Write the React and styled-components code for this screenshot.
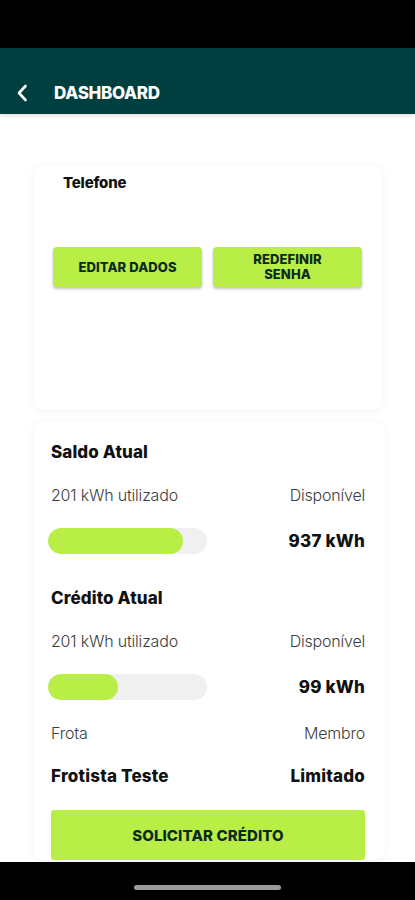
import React from "react";
import styled, { createGlobalStyle } from "styled-components";

const GlobalStyle = createGlobalStyle`
  html, body {
    margin: 0;
    padding: 0;
    background: #fff;
    font-family: Inter, "Noto Sans", "Liberation Sans", sans-serif;
  }
  * {
    box-sizing: border-box;
  }
`;

const Screen = styled.div`
  width: 100%;
  height: 100vh;
  display: flex;
  flex-direction: column;
  overflow: hidden;
  background: #fff;
`;

const StatusBar = styled.div`
  height: 48px;
  background: #000;
  flex-shrink: 0;
`;

const Header = styled.header`
  height: 66px;
  flex-shrink: 0;
  background: #003f3f;
  display: flex;
  align-items: center;
  padding: 24px 0 0 14px;
  gap: 24px;
  box-shadow: 0 2px 4px rgba(0, 0, 0, 0.12);
  position: relative;
  z-index: 1;
`;

const BackButton = styled.button`
  background: transparent;
  border: none;
  padding: 0;
  width: 16px;
  height: 20px;
  display: flex;
  align-items: center;
  justify-content: center;
  cursor: pointer;
`;

const Title = styled.h1`
  margin: 0;
  color: #fff;
  font-size: 17px;
  font-weight: 800;
  letter-spacing: -0.3px;
`;

const Content = styled.main`
  flex: 1;
  overflow: hidden;
  padding: 51px 30px 0 33px;
  display: flex;
  flex-direction: column;
  gap: 12px;
`;

const Card = styled.section`
  background: #fff;
  border-radius: 10px;
  box-shadow: 0 1px 6px rgba(0, 0, 0, 0.06);
  width: ${(p) => p.width}px;
  height: ${(p) => (p.height ? `${p.height}px` : "auto")};
  padding: ${(p) => p.padding};
  flex-shrink: 0;
`;

const FieldLabel = styled.div`
  font-size: 15px;
  font-weight: 800;
  color: #111;
  line-height: 18px;
  margin-left: 10px;
  letter-spacing: -0.2px;
`;

const ButtonRow = styled.div`
  display: flex;
  gap: 11px;
  margin-top: 55px;
`;

const SmallButton = styled.button`
  width: 149px;
  height: 40px;
  border: none;
  border-radius: 4px;
  background: #b8ee45;
  box-shadow: 0 2px 3px rgba(0, 0, 0, 0.25);
  color: #0c2a24;
  font-family: inherit;
  font-size: 13px;
  font-weight: 800;
  line-height: 15px;
  letter-spacing: 0.1px;
  text-transform: uppercase;
  cursor: pointer;
`;

const SectionTitle = styled.h2`
  margin: ${(p) => p.top}px 0 0;
  font-size: 17px;
  font-weight: 800;
  line-height: 20px;
  color: #111;
  letter-spacing: 0.1px;
`;

const Row = styled.div`
  display: flex;
  justify-content: space-between;
  align-items: center;
  margin-top: ${(p) => p.top}px;
  height: ${(p) => p.height || 20}px;
`;

const Muted = styled.span`
  font-size: 16px;
  font-weight: 300;
  color: #3d3d3d;
  letter-spacing: -0.2px;
`;

const Strong = styled.span`
  font-size: 17px;
  font-weight: 800;
  color: #111;
  letter-spacing: 0.2px;
`;

const Track = styled.div`
  width: 159px;
  height: 26px;
  margin-left: -3px;
  border-radius: 13px;
  background: #f0f0f0;
  overflow: hidden;
`;

const Fill = styled.div`
  height: 100%;
  border-radius: 13px;
  background: #b8ee45;
`;

const BigButton = styled.button`
  margin-top: 24px;
  width: 314px;
  height: 50px;
  border: none;
  border-radius: 3px;
  background: #b8ee45;
  color: #0c2a24;
  font-family: inherit;
  font-size: 15px;
  font-weight: 800;
  letter-spacing: 0.1px;
  cursor: pointer;
`;

const NavBar = styled.div`
  height: 38px;
  flex-shrink: 0;
  background: #000;
  display: flex;
  align-items: center;
  justify-content: center;
  padding-top: 12px;
`;

const HomeIndicator = styled.div`
  width: 147px;
  height: 5px;
  border-radius: 3px;
  background: #9a9a9a;
`;

const Balance = ({ title, top, used, available, percent }) => (
  <>
    <SectionTitle top={top}>{title}</SectionTitle>
    <Row top={23}>
      <Muted>{used}</Muted>
      <Muted>Disponível</Muted>
    </Row>
    <Row top={23} height={26}>
      <Track>
        <Fill style={{ width: `${percent}%` }} />
      </Track>
      <Strong>{available}</Strong>
    </Row>
  </>
);

const App = () => {
  return (
    <Screen>
      <GlobalStyle />
      <StatusBar />
      <Header>
        <BackButton aria-label="Voltar">
          <svg width="12" height="18" viewBox="0 0 12 18" fill="none">
            <path
              d="M9.5 2 L3 9 L9.5 16"
              stroke="#fff"
              strokeWidth="2.6"
              strokeLinecap="round"
              strokeLinejoin="round"
            />
          </svg>
        </BackButton>
        <Title>DASHBOARD</Title>
      </Header>
      <Content>
        <Card width={350} height={245} padding="9px 20px 0 20px">
          <FieldLabel>Telefone</FieldLabel>
          <ButtonRow>
            <SmallButton>Editar dados</SmallButton>
            <SmallButton>
              Redefinir
              <br />
              senha
            </SmallButton>
          </ButtonRow>
        </Card>
        <Card width={352} padding="20px 20px 0 18px">
          <Balance
            title="Saldo Atual"
            top={0}
            used="201 kWh utilizado"
            available="937 kWh"
            percent={85}
          />
          <Balance
            title="Crédito Atual"
            top={34}
            used="201 kWh utilizado"
            available="99 kWh"
            percent={44}
          />
          <Row top={23}>
            <Muted>Frota</Muted>
            <Muted>Membro</Muted>
          </Row>
          <Row top={23}>
            <Strong>Frotista Teste</Strong>
            <Strong>Limitado</Strong>
          </Row>
          <BigButton>SOLICITAR CRÉDITO</BigButton>
        </Card>
      </Content>
      <NavBar>
        <HomeIndicator />
      </NavBar>
    </Screen>
  );
};

export default App;
